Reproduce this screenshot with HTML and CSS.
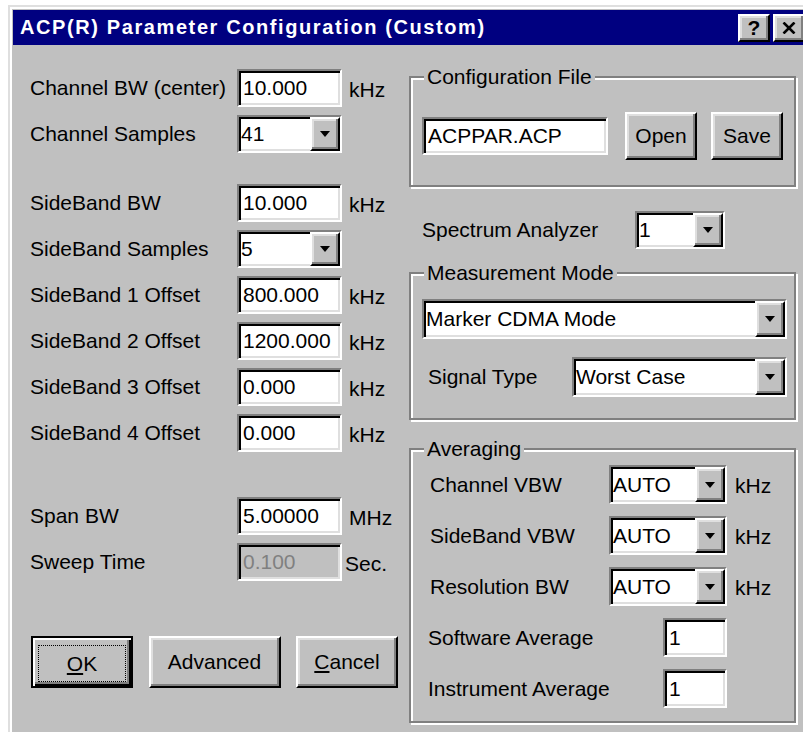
FILE: index.html
```html
<!DOCTYPE html>
<html>
<head>
<meta charset="utf-8">
<title>ACP(R) Parameter Configuration (Custom)</title>
<link rel="stylesheet" href="styles.css">
</head>
<body>
<div class="window">
  <div class="titlebar">
    <span class="title">ACP(R) Parameter Configuration (Custom)</span>
    <span class="tbtn raised"><span class="help">?</span></span>
    <span class="tbtn raised">
      <svg width="14" height="12" viewBox="0 0 14 12"><path d="M1.5 0.5 L12.5 11.5 M12.5 0.5 L1.5 11.5" stroke="#000" stroke-width="2.6" fill="none"/></svg>
    </span>
  </div>

  <div class="content">
    <div class="left">
      <div class="row">
        <span class="label">Channel BW (center)</span>
        <span class="field sunken">10.000</span>
        <span class="unit">kHz</span>
      </div>
      <div class="row">
        <span class="label">Channel Samples</span>
        <span class="combo sunken"><span class="value">41</span><span class="drop raised"></span></span>
      </div>

      <div class="row gap-md">
        <span class="label">SideBand BW</span>
        <span class="field sunken">10.000</span>
        <span class="unit">kHz</span>
      </div>
      <div class="row">
        <span class="label">SideBand Samples</span>
        <span class="combo sunken"><span class="value">5</span><span class="drop raised"></span></span>
      </div>
      <div class="row">
        <span class="label">SideBand 1 Offset</span>
        <span class="field sunken">800.000</span>
        <span class="unit">kHz</span>
      </div>
      <div class="row">
        <span class="label">SideBand 2 Offset</span>
        <span class="field sunken">1200.000</span>
        <span class="unit">kHz</span>
      </div>
      <div class="row">
        <span class="label">SideBand 3 Offset</span>
        <span class="field sunken">0.000</span>
        <span class="unit">kHz</span>
      </div>
      <div class="row">
        <span class="label">SideBand 4 Offset</span>
        <span class="field sunken">0.000</span>
        <span class="unit">kHz</span>
      </div>

      <div class="row gap-lg">
        <span class="label">Span BW</span>
        <span class="field sunken">5.00000</span>
        <span class="unit">MHz</span>
      </div>
      <div class="row">
        <span class="label">Sweep Time</span>
        <span class="field sunken disabled">0.100</span>
        <span class="unit tight">Sec.</span>
      </div>

      <div class="actions">
        <span class="btn btn-default"><span class="focus"><u>O</u>K</span></span>
        <span class="btn raised btn-wide">Advanced</span>
        <span class="btn raised btn-cancel"><u>C</u>ancel</span>
      </div>
    </div>

    <div class="right">
      <fieldset class="group group-file">
        <legend>Configuration File</legend>
        <div class="file-row">
          <span class="field sunken file-name">ACPPAR.ACP</span>
          <span class="btn raised btn-small btn-open">Open</span>
          <span class="btn raised btn-small btn-save">Save</span>
        </div>
      </fieldset>

      <div class="spec-row">
        <span class="label">Spectrum Analyzer</span>
        <span class="combo sunken"><span class="value">1</span><span class="drop raised"></span></span>
      </div>

      <fieldset class="group group-mode">
        <legend>Measurement Mode</legend>
        <div class="mode-body">
          <span class="combo sunken combo-tall"><span class="value">Marker CDMA Mode</span><span class="drop raised"></span></span>
          <div class="signal-row">
            <span class="label">Signal Type</span>
            <span class="combo sunken combo-tall"><span class="value">Worst Case</span><span class="drop raised"></span></span>
          </div>
        </div>
      </fieldset>

      <fieldset class="group group-avg">
        <legend>Averaging</legend>
        <div class="avg-grid">
          <span class="label">Channel VBW</span>
          <span class="combo sunken combo-avg"><span class="value">AUTO</span><span class="drop raised"></span></span>
          <span class="unit">kHz</span>

          <span class="label">SideBand VBW</span>
          <span class="combo sunken combo-avg"><span class="value">AUTO</span><span class="drop raised"></span></span>
          <span class="unit">kHz</span>

          <span class="label">Resolution BW</span>
          <span class="combo sunken combo-avg"><span class="value">AUTO</span><span class="drop raised"></span></span>
          <span class="unit">kHz</span>

          <span class="label label-wide">Software Average</span>
          <span class="field sunken count">1</span>
          <span></span>

          <span class="label label-wide">Instrument Average</span>
          <span class="field sunken count">1</span>
          <span></span>
        </div>
      </fieldset>
    </div>
  </div>
</div>
</body>
</html>
```

FILE: styles.css
```css
html, body {
  margin: 0;
  padding: 0;
}

body {
  background: #fff;
  overflow: hidden;
  font-family: "Liberation Sans", Arial, sans-serif;
  font-size: 21px;
  color: #000;
}

/* 3D bevels */
.raised {
  background: #c0c0c0;
  border: 2px solid;
  border-color: #fff #000 #000 #fff;
  box-shadow: inset -2px -2px 0 #808080, inset 2px 2px 0 #dfdfdf;
  box-sizing: border-box;
}

.sunken {
  border: 2px solid;
  border-color: #808080 #fff #fff #808080;
  box-shadow: inset 2px 2px 0 #000, inset -2px -2px 0 #dfdfdf;
  box-sizing: border-box;
}

/* window frame */
.window {
  margin: 5px 0 0 8px;
  width: 804px;
  height: 760px;
  box-sizing: border-box;
  background: #c0c0c0;
  border: 2px solid;
  border-color: #dfdfdf #000 #000 #dfdfdf;
  box-shadow: inset 2px 2px 0 #fff, inset -2px -2px 0 #808080;
  padding: 3px;
}

.titlebar {
  height: 35px;
  background: #000080;
  display: flex;
  align-items: center;
  padding: 0 2px 0 7px;
}

.title {
  flex: 1;
  color: #fff;
  font-weight: bold;
  font-size: 20px;
  letter-spacing: 1.6px;
  white-space: nowrap;
}

.tbtn {
  width: 32px;
  height: 28px;
  display: flex;
  align-items: center;
  justify-content: center;
}

.tbtn + .tbtn {
  margin-left: 3px;
}

.help {
  font-weight: bold;
  font-size: 21px;
  line-height: 1;
}

/* dialog body */
.content {
  display: flex;
  padding-left: 17px;
}

.left {
  width: 379px;
  padding-top: 24px;
}

.row {
  display: grid;
  grid-template-columns: 200px 105px auto;
  column-gap: 7px;
  align-items: center;
  height: 38px;
  margin-top: 8px;
}

.left > .row:first-child {
  margin-top: 0;
}

.row.gap-md {
  margin-top: 31px;
}

.row.gap-lg {
  margin-top: 45px;
}

.label {
  white-space: nowrap;
}

.unit {
  padding-top: 3px;
}

.unit.tight {
  margin-left: -4px;
}

.field {
  height: 38px;
  background: #fff;
  display: flex;
  align-items: center;
  padding-left: 4px;
  white-space: nowrap;
  overflow: hidden;
}

.field.disabled {
  background: #c0c0c0;
  color: #808080;
}

.combo {
  display: flex;
  height: 38px;
  background: #fff;
}

.combo .value {
  flex: 1;
  display: flex;
  align-items: center;
  padding-left: 2px;
  white-space: nowrap;
  overflow: hidden;
}

.combo .drop {
  width: 30px;
  display: flex;
  align-items: center;
  justify-content: center;
}

.combo .drop::after {
  content: "";
  width: 0;
  height: 0;
  border-left: 5px solid transparent;
  border-right: 5px solid transparent;
  border-top: 6px solid #000;
}

.combo-tall {
  height: 40px;
}

/* push buttons */
.actions {
  display: flex;
  justify-content: space-between;
  width: 367px;
  margin: 55px 0 0 1px;
}

.btn {
  height: 52px;
  display: flex;
  align-items: center;
  justify-content: center;
  white-space: nowrap;
  box-sizing: border-box;
}

.btn-default {
  width: 102px;
  background: #c0c0c0;
  border: 2px solid #000;
  box-shadow: inset 2px 2px 0 #fff, inset -2px -2px 0 #000, inset -4px -4px 0 #808080;
  padding: 7px 5px 4px 5px;
}

.focus {
  flex: 1;
  align-self: stretch;
  display: flex;
  align-items: center;
  justify-content: center;
  border: 1px dotted #000;
}

.btn-wide {
  width: 132px;
}

.btn-cancel {
  width: 102px;
}

/* right column */
.right {
  width: 387px;
}

.group {
  margin: 0;
  padding: 0;
  min-width: 0;
  border: 2px solid #808080;
  box-shadow: inset 2px 2px 0 #fff, 2px 2px 0 #fff;
}

.group legend {
  margin-left: 13px;
  padding: 0 3px;
  line-height: 24px;
  background: #c0c0c0;
}

.group-file {
  margin-top: 20px;
}

.file-row {
  display: flex;
  align-items: center;
  padding: 23px 0 25px 11px;
}

.file-name {
  width: 186px;
}

.btn-small {
  width: 72px;
  height: 48px;
}

.btn-open {
  margin-left: 17px;
}

.btn-save {
  margin-left: 14px;
}

.spec-row {
  display: grid;
  grid-template-columns: 213px 90px;
  align-items: center;
  height: 38px;
  margin-top: 24px;
  padding-left: 13px;
}

.group-mode {
  margin-top: 12px;
}

.mode-body {
  display: flex;
  flex-direction: column;
  padding: 14px 7px 21px 11px;
}

.signal-row {
  display: grid;
  grid-template-columns: 144px 215px;
  align-items: center;
  margin-top: 18px;
  padding-left: 6px;
}

.group-avg {
  margin-top: 17px;
}

.avg-grid {
  display: grid;
  grid-template-columns: 171px 118px auto;
  grid-auto-rows: 39px;
  column-gap: 8px;
  row-gap: 12px;
  align-items: center;
  padding: 4px 0 13px 19px;
}

.combo-avg {
  height: 39px;
}

.label-wide {
  margin-left: -2px;
}

.count {
  width: 64px;
  height: 39px;
  justify-self: end;
}
```
